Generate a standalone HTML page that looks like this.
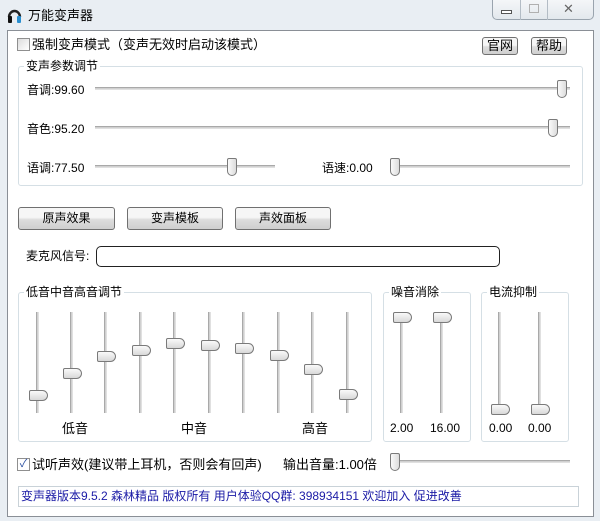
<!DOCTYPE html>
<html><head><meta charset="utf-8"><style>
*{box-sizing:border-box;margin:0;padding:0}
body{width:600px;height:521px;background:#e9eef3;position:relative;overflow:hidden;font-family:"Liberation Sans","Noto Sans CJK SC",sans-serif;font-size:12px;color:#000}
.a{position:absolute;white-space:nowrap;line-height:14px}
.client{position:absolute;left:7px;top:30px;width:587px;height:487px;background:#fff;border:1px solid #8a8f96}
.grp{position:absolute;border:1px solid #d5dfe5;border-radius:3px}
.gl{position:absolute;top:-8px;left:5px;background:#fff;padding:0 2px;line-height:14px}
.htr{position:absolute;height:3px;border-top:1px solid #a9a9a9;border-bottom:1px solid #e0e0e0;background:#d0d0d0}
.vtr{position:absolute;width:3px;height:101px;border-left:1px solid #a9a9a9;border-right:1px solid #e0e0e0;background:#d0d0d0}
.ht{position:absolute;width:10px;height:18px;border:1px solid #7a7a7a;border-radius:2px 2px 5px 5px;background:linear-gradient(90deg,#fafafa,#dcdcdc)}
.vt{position:absolute;width:19px;height:11px;border:1px solid #7a7a7a;border-radius:2px 6px 6px 2px;background:linear-gradient(#fafafa,#d8d8d8)}
.btn{position:absolute;border:1px solid #707070;border-radius:3px;background:linear-gradient(#f6f6f6 45%,#dddddd 55%,#cfcfcf);text-align:center;line-height:20px}
.cb{position:absolute;width:13px;height:13px;border:1px solid #8f8f8f;background:linear-gradient(135deg,#dcdcdc,#fff)}
</style></head><body>
<svg class="a" style="left:7px;top:7px" width="15" height="17" viewBox="0 0 15 17"><path d="M2 10 A5.5 6 0 0 1 13 10" fill="none" stroke="#222" stroke-width="2.4"/><rect x="1" y="9" width="4" height="7" rx="1" fill="#111"/><rect x="10" y="9" width="4" height="7" rx="1" fill="#2a8fd0"/></svg>
<div class="a" style="left:28px;top:9px;font-size:13px">万能变声器</div>
<div class="a" style="left:492px;top:0;width:102px;height:20px;border:1px solid #9aa4ae;border-top:none;border-radius:0 0 5px 5px;background:linear-gradient(#f4f6f8,#e3e8ed)"></div>
<div class="a" style="left:520px;top:0;width:1px;height:20px;background:#b3bcc5"></div>
<div class="a" style="left:547px;top:0;width:1px;height:20px;background:#b3bcc5"></div>
<div class="a" style="left:501px;top:10px;width:11px;height:4px;border:1px solid #555;background:#fff"></div>
<div class="a" style="left:529px;top:4px;width:10px;height:9px;border:1px solid #b0b0b0"></div>
<div class="a" style="left:563px;top:2px;font-size:13px;color:#666">✕</div>
<div class="client"></div>
<div class="cb" style="left:17px;top:38px"></div>
<div class="a" style="left:32px;top:38px;font-size:13px">强制变声模式（变声无效时启动该模式）</div>
<div class="btn" style="left:482px;top:37px;width:36px;height:18px;line-height:16px;font-size:13px">官网</div>
<div class="btn" style="left:531px;top:37px;width:36px;height:18px;line-height:16px;font-size:13px">帮助</div>
<div class="grp" style="left:18px;top:66px;width:565px;height:120px"><div class="gl">变声参数调节</div></div>
<div class="a" style="left:27px;top:83px">音调:99.60</div>
<div class="htr" style="left:95px;top:87px;width:475px"></div>
<div class="ht" style="left:557px;top:80px"></div>
<div class="a" style="left:27px;top:122px">音色:95.20</div>
<div class="htr" style="left:95px;top:126px;width:475px"></div>
<div class="ht" style="left:548px;top:119px"></div>
<div class="a" style="left:27px;top:161px">语调:77.50</div>
<div class="htr" style="left:95px;top:165px;width:180px"></div>
<div class="ht" style="left:227px;top:158px"></div>
<div class="a" style="left:322px;top:161px">语速:0.00</div>
<div class="htr" style="left:390px;top:165px;width:180px"></div>
<div class="ht" style="left:390px;top:158px"></div>
<div class="btn" style="left:18px;top:207px;width:97px;height:23px">原声效果</div>
<div class="btn" style="left:127px;top:207px;width:96px;height:23px">变声模板</div>
<div class="btn" style="left:235px;top:207px;width:96px;height:23px">声效面板</div>
<div class="a" style="left:26px;top:249px">麦克风信号:</div>
<div class="a" style="left:96px;top:246px;width:404px;height:21px;border:1px solid #222;border-radius:5px;background:#fff"></div>
<div class="grp" style="left:18px;top:292px;width:354px;height:150px"><div class="gl">低音中音高音调节</div></div>
<div class="grp" style="left:383px;top:292px;width:88px;height:150px"><div class="gl">噪音消除</div></div>
<div class="grp" style="left:481px;top:292px;width:88px;height:150px"><div class="gl">电流抑制</div></div>
<div class="vtr" style="left:36px;top:312px"></div><div class="vt" style="left:29px;top:390px"></div>
<div class="vtr" style="left:70px;top:312px"></div><div class="vt" style="left:63px;top:368px"></div>
<div class="vtr" style="left:104px;top:312px"></div><div class="vt" style="left:97px;top:351px"></div>
<div class="vtr" style="left:139px;top:312px"></div><div class="vt" style="left:132px;top:345px"></div>
<div class="vtr" style="left:173px;top:312px"></div><div class="vt" style="left:166px;top:338px"></div>
<div class="vtr" style="left:208px;top:312px"></div><div class="vt" style="left:201px;top:340px"></div>
<div class="vtr" style="left:242px;top:312px"></div><div class="vt" style="left:235px;top:343px"></div>
<div class="vtr" style="left:277px;top:312px"></div><div class="vt" style="left:270px;top:350px"></div>
<div class="vtr" style="left:311px;top:312px"></div><div class="vt" style="left:304px;top:364px"></div>
<div class="vtr" style="left:346px;top:312px"></div><div class="vt" style="left:339px;top:389px"></div>
<div class="a" style="left:62px;top:422px;font-size:13px">低音</div>
<div class="a" style="left:181px;top:422px;font-size:13px">中音</div>
<div class="a" style="left:302px;top:422px;font-size:13px">高音</div>
<div class="vtr" style="left:400px;top:312px"></div><div class="vt" style="left:393px;top:312px"></div>
<div class="vtr" style="left:440px;top:312px"></div><div class="vt" style="left:433px;top:312px"></div>
<div class="a" style="left:390px;top:421px">2.00</div>
<div class="a" style="left:430px;top:421px">16.00</div>
<div class="vtr" style="left:498px;top:312px"></div><div class="vt" style="left:491px;top:404px"></div>
<div class="vtr" style="left:538px;top:312px"></div><div class="vt" style="left:531px;top:404px"></div>
<div class="a" style="left:489px;top:421px">0.00</div>
<div class="a" style="left:528px;top:421px">0.00</div>
<div class="cb" style="left:17px;top:458px;background:#fff;color:#2a4fa0;font-size:11px;line-height:11px;text-align:center">✓</div>
<div class="a" style="left:32px;top:458px;font-size:13px">试听声效(建议带上耳机，否则会有回声)</div>
<div class="a" style="left:283px;top:458px;font-size:13px">输出音量:1.00倍</div>
<div class="htr" style="left:390px;top:460px;width:180px"></div>
<div class="ht" style="left:390px;top:453px"></div>
<div class="a" style="left:18px;top:486px;width:561px;height:21px;border:1px solid #c9d2d8;background:#fff"></div>
<div class="a" style="left:21px;top:489px;color:#1a1aa6">变声器版本9.5.2 森林精品 版权所有 用户体验QQ群: 398934151 欢迎加入 促进改善</div>
</body></html>
